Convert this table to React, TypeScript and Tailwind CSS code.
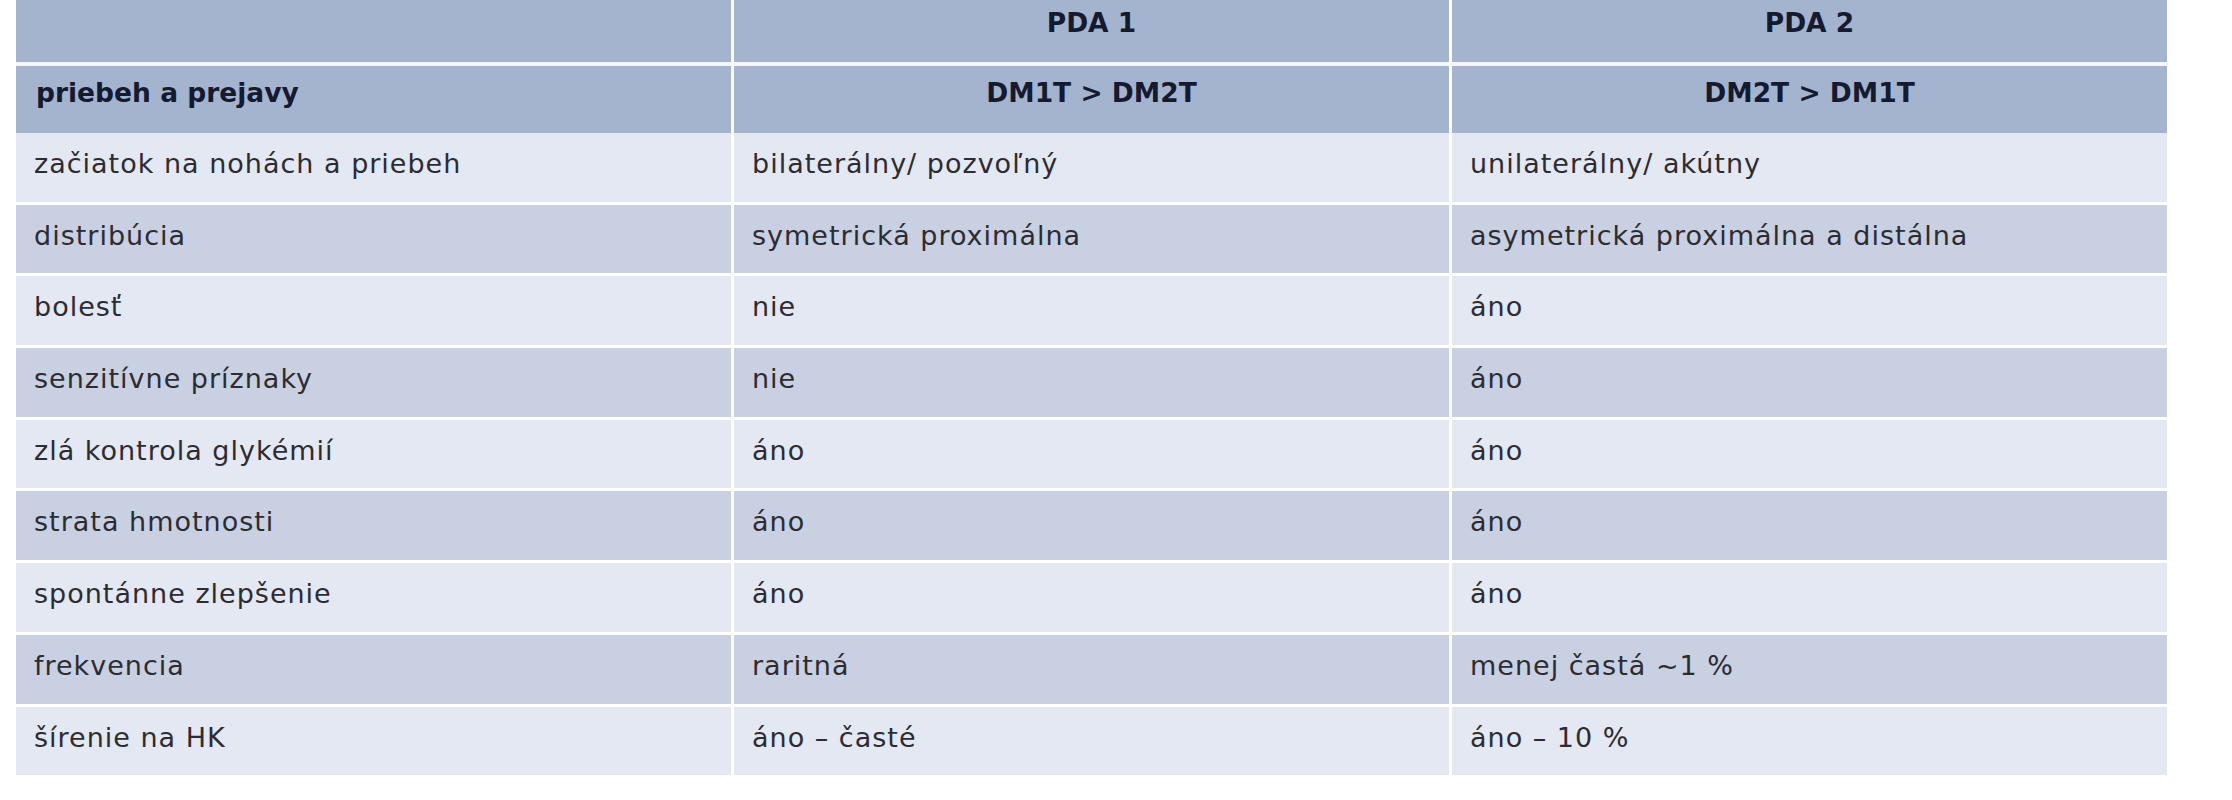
import React from 'react';

type Row = [string, string, string];

const rows: Row[] = [
  ['začiatok na nohách a priebeh', 'bilaterálny/ pozvoľný', 'unilaterálny/ akútny'],
  ['distribúcia', 'symetrická proximálna', 'asymetrická proximálna a distálna'],
  ['bolesť', 'nie', 'áno'],
  ['senzitívne príznaky', 'nie', 'áno'],
  ['zlá kontrola glykémií', 'áno', 'áno'],
  ['strata hmotnosti', 'áno', 'áno'],
  ['spontánne zlepšenie', 'áno', 'áno'],
  ['frekvencia', 'raritná', 'menej častá ~1 %'],
  ['šírenie na HK', 'áno – časté', 'áno – 10 %'],
];

const HeadCell: React.FC<{ children?: React.ReactNode; center?: boolean; tall?: boolean }> = ({
  children,
  center,
  tall,
}) => (
  <div
    className={`bg-[#a4b4cf] text-[#141a30] font-bold text-[26.5px] leading-[36px] px-[20px] ${
      tall ? 'h-[67px] pt-[9px]' : 'h-[62px] pt-[5px]'
    } ${center ? 'text-center' : 'text-left'}`}
  >
    {children}
  </div>
);

const App: React.FC = () => (
  <div
    className="bg-white w-[2232px] h-[800px] overflow-hidden pl-[16px]"
    style={{ fontFamily: '"DejaVu Sans", Verdana, sans-serif' }}
  >
    <div className="w-[2151px] grid grid-cols-3 gap-x-[3px]">
      <HeadCell />
      <HeadCell center>PDA 1</HeadCell>
      <HeadCell center>PDA 2</HeadCell>

      <div className="col-span-3 h-[4px] bg-[#f4f7fc]" />

      <HeadCell tall>priebeh a prejavy</HeadCell>
      <HeadCell tall center>DM1T &gt; DM2T</HeadCell>
      <HeadCell tall center>DM2T &gt; DM1T</HeadCell>

      {rows.map((r, i) => (
        <React.Fragment key={i}>
          {i > 0 && <div className="col-span-3 h-[3px] bg-white" />}
          {r.map((c, j) => (
            <div
              key={j}
              className={`${
                i % 2 === 0 ? 'bg-[#e4e8f2]' : 'bg-[#c8d0e2]'
              } h-[68.7px] pt-[13px] pl-[18px] text-[27px] leading-[36px] tracking-[1px] text-[#2c2c33]`}
            >
              {c}
            </div>
          ))}
        </React.Fragment>
      ))}
    </div>
  </div>
);

export default App;
